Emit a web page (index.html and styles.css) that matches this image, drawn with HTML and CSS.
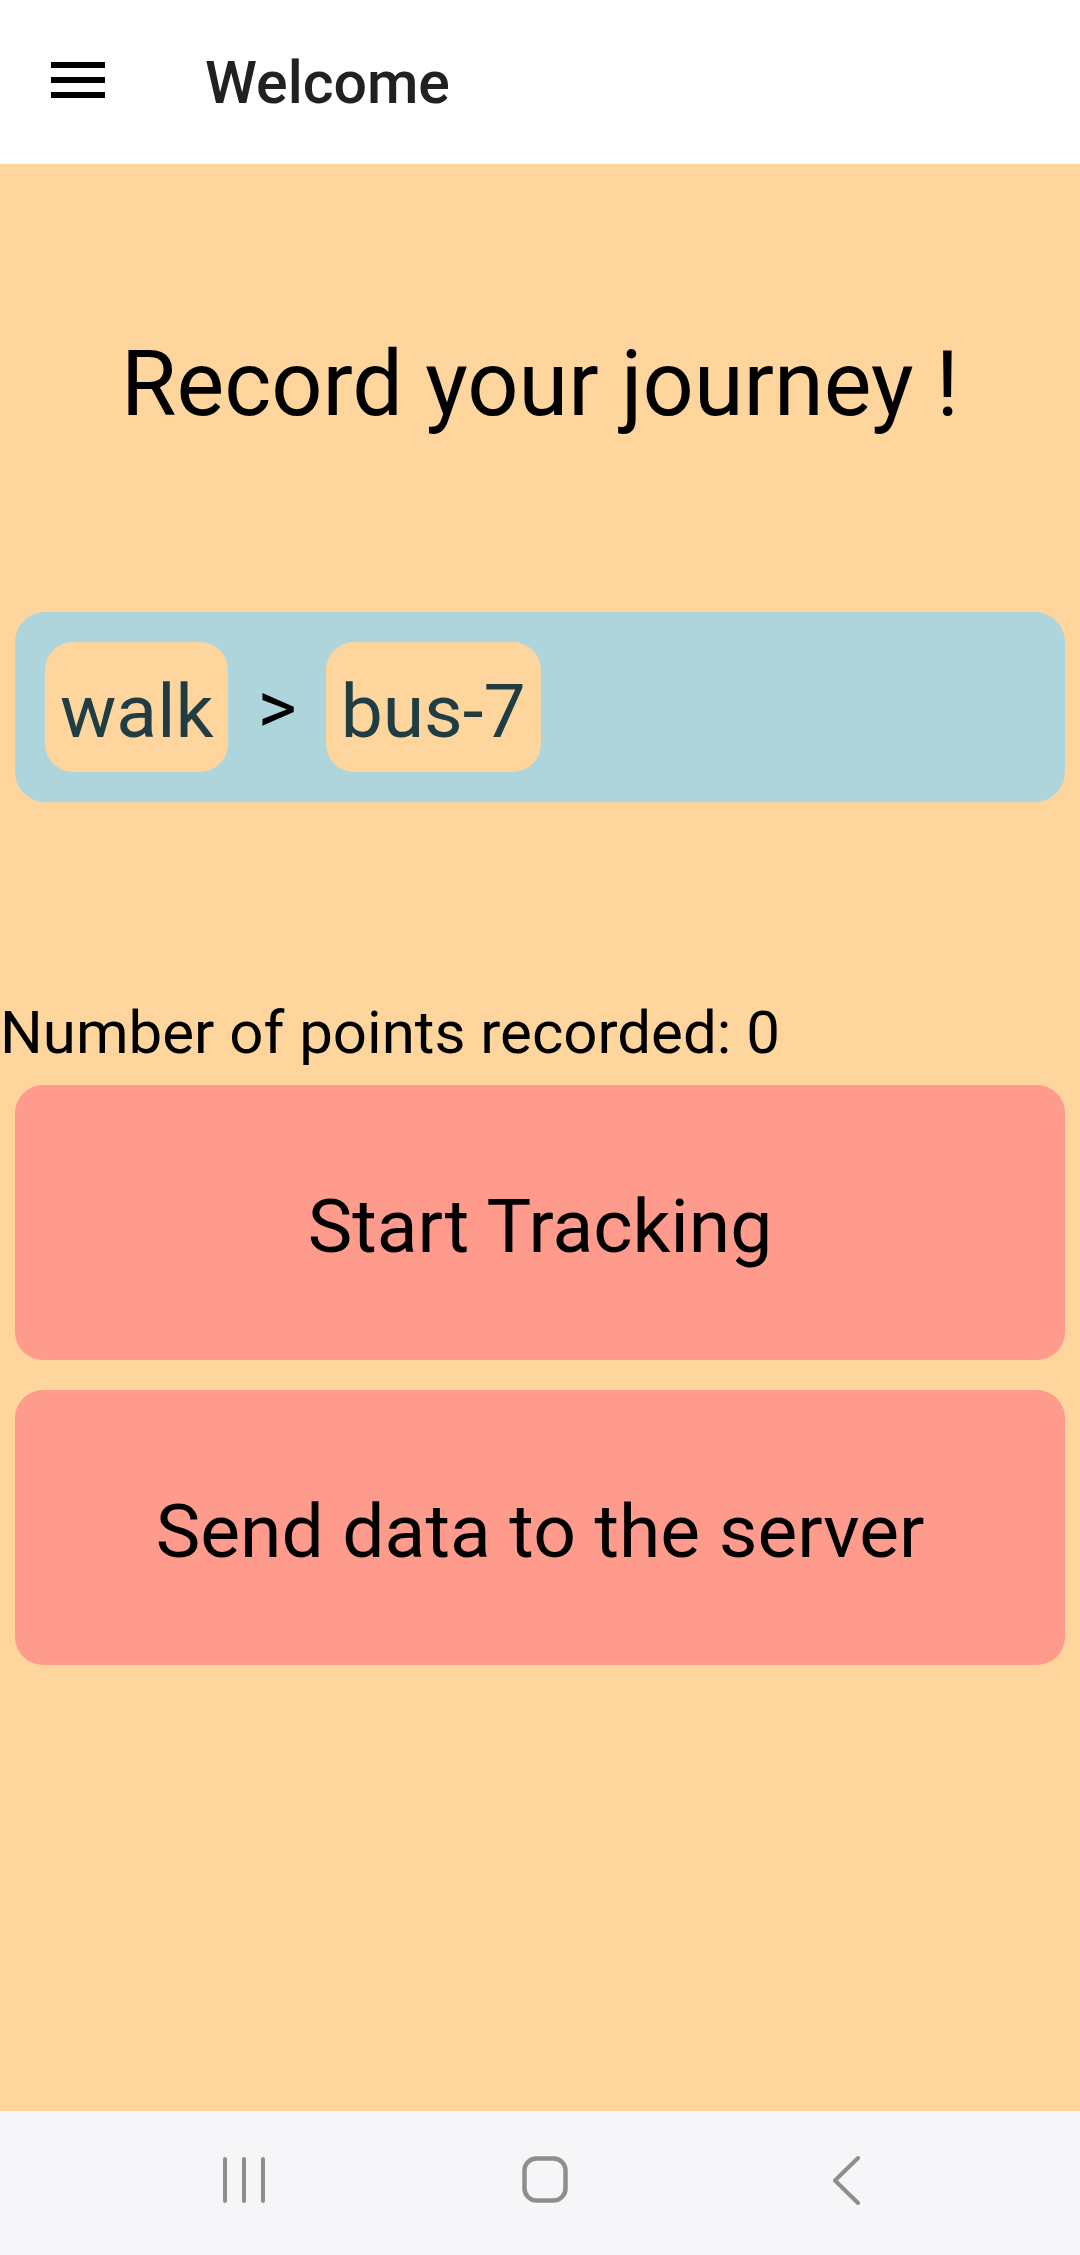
FILE: index.html
```html
<!DOCTYPE html>
<html lang="en">
<head>
	<meta charset="UTF-8">
	<title>Welcome</title>
	<link rel="stylesheet" href="styles.css">
</head>
<body>
	<header class="appbar">
		<svg class="appbar__menu" width="54" height="36" viewBox="0 0 54 36">
			<rect x="0" y="0" width="54" height="6" fill="#000"/>
			<rect x="0" y="15" width="54" height="6" fill="#000"/>
			<rect x="0" y="30" width="54" height="6" fill="#000"/>
		</svg>
		<h1 class="appbar__title">Welcome</h1>
	</header>

	<main class="journey">
		<h2 class="journey__title">Record your journey !</h2>
		<div class="route">
			<span class="route__step">walk</span>
			<span class="route__sep">&gt;</span>
			<span class="route__step">bus-7</span>
		</div>
		<p class="journey__count">Number of points recorded: 0</p>
		<button class="journey__button">Start Tracking</button>
		<button class="journey__button journey__button--send">Send data to the server</button>
	</main>

	<nav class="navbar">
		<div class="navbar__slot">
			<svg width="46" height="48" viewBox="0 0 46 48">
				<g stroke="#8e8e8e" stroke-width="4" stroke-linecap="round">
					<line x1="5" y1="3" x2="5" y2="45"/>
					<line x1="24" y1="3" x2="24" y2="45"/>
					<line x1="43" y1="3" x2="43" y2="45"/>
				</g>
			</svg>
		</div>
		<div class="navbar__slot">
			<svg width="48" height="48" viewBox="0 0 48 48">
				<rect x="3.5" y="2.5" width="41" height="42" rx="12" fill="none" stroke="#8e8e8e" stroke-width="4.5"/>
			</svg>
		</div>
		<div class="navbar__slot">
			<svg width="30" height="50" viewBox="0 0 30 50">
				<polyline points="26,3 3,25.5 26,48" fill="none" stroke="#8e8e8e" stroke-width="4" stroke-linecap="round" stroke-linejoin="round"/>
			</svg>
		</div>
	</nav>
</body>
</html>
```

FILE: styles.css
```css
body {
	margin: 0;
	height: 2255px;
	display: flex;
	flex-direction: column;
	font-family: Roboto, "Noto Sans", sans-serif;
	background-color: #fed59c;
}
.appbar {
	height: 164px;
	flex-shrink: 0;
	display: flex;
	align-items: center;
	padding-left: 51px;
	background-color: #fff;
}
.appbar__menu {
	margin-bottom: 4px;
}
.appbar__title {
	margin: 0 0 0 100px;
	font-size: 59px;
	font-weight: 500;
	color: #212121;
}
.journey {
	flex: 1;
	display: flex;
	flex-direction: column;
}
.journey__title {
	margin: 166px 0 0;
	font-size: 90px;
	line-height: 109px;
	font-weight: 400;
	text-align: center;
	color: #000;
}
.route {
	margin: 173px 15px 0;
	padding: 30px;
	display: flex;
	align-items: center;
	gap: 29px;
	background-color: #aed5dc;
	border-radius: 30px;
}
.route__step {
	height: 130px;
	box-sizing: border-box;
	padding: 8px 15px 0;
	font-size: 75px;
	line-height: 122px;
	color: #203d44;
	background-color: #fed59c;
	border-radius: 28px;
}
.route__sep {
	font-size: 75px;
	line-height: 76px;
	color: #000;
}
.journey__count {
	margin: 195px 0 0;
	font-size: 60px;
	line-height: 72px;
	color: #000;
}
.journey__button {
	margin: 16px 15px 0;
	height: 275px;
	padding: 6px 0 0;
	border: none;
	border-radius: 28px;
	background-color: #fe9b8d;
	font-family: Roboto, "Noto Sans", sans-serif;
	font-size: 75px;
	color: #000;
}
.journey__button--send {
	margin-top: 30px;
}
.navbar {
	height: 144px;
	flex-shrink: 0;
	display: flex;
	justify-content: center;
	align-items: center;
	padding: 0 0 6px 10px;
	box-sizing: border-box;
	background-color: #f6f5f8;
}
.navbar__slot {
	width: 302px;
	display: flex;
	justify-content: center;
}
```
